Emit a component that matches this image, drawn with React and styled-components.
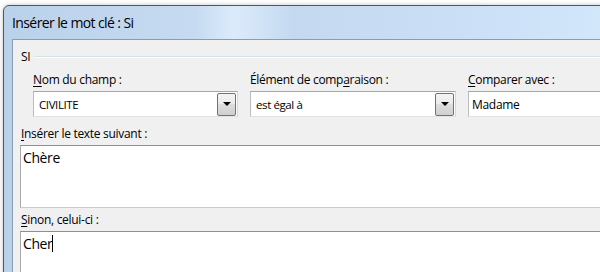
import React from 'react';
import styled, { createGlobalStyle } from 'styled-components';

//page reset: screenshot shows the window cut off at right and bottom
const GlobalStyle = createGlobalStyle`
    html, body {
        margin: 0;
        padding: 0;
        background: #ffffff;
        overflow: hidden;
    }
    body {
        font-family: "Open Sans", "Noto Sans", sans-serif;
        font-size: 12px;
        letter-spacing: -0.3px;
        color: #000;
    }
`;

//Window frame (aero style)
const Window = styled.div`
    margin: 5px 0 0 3px;
    width: 640px;
    height: 320px;
    border: 1px solid #4d5867;
    border-radius: 6px 6px 0 0;
    background: linear-gradient(90deg, #bad1eb 0%, #c6dbf1 30%, #dcebfb 36%, #c4d9f0 45%, #cde2f8 80%, #d6e9fc 100%);
    display: flex;
    flex-direction: column;
    box-shadow: 0 0 4px rgba(0, 0, 0, 0.25);
`;

const TitleBar = styled.div`
    height: 33px;
    display: flex;
    align-items: center;
    padding-left: 8px;
    font-size: 14px;
    letter-spacing: -0.6px;
    color: #000;
`;

const Client = styled.div`
    flex: 1;
    margin-left: 8px;
    border-top: 1px solid #8a9cb0;
    border-left: 1px solid #8a9cb0;
    background: #f0f0f0;
    padding: 9px 0 0 8px;
    display: flex;
    flex-direction: column;
`;

const GroupHeader = styled.div`
    display: flex;
    align-items: center;
    gap: 5px;
    height: 16px;
    line-height: 16px;
`;

const GroupLine = styled.div`
    flex: 1;
    height: 1px;
    background: #d5dfe5;
    border-bottom: 1px solid #ffffff;
`;

const FieldsRow = styled.div`
    display: grid;
    grid-template-columns: 205px 206px 205px;
    column-gap: 12px;
    margin: 7px 0 0 12px;
`;

const Field = styled.div`
    display: flex;
    flex-direction: column;
    gap: 3px;
`;

const Label = styled.label`
    display: block;
    height: 16px;
    line-height: 16px;
    white-space: nowrap;
    & u {
        text-decoration: underline;
        text-underline-offset: 2px;
    }
`;

const Combo = styled.div`
    height: 24px;
    display: flex;
    align-items: center;
    background: #fff;
    border: 1px solid;
    border-color: #a3a6ad #d3d6dc #dfe2e8 #b9bcc2;
`;

const ComboText = styled.span`
    flex: 1;
    padding-left: 5px;
    font-size: 11.5px;
    letter-spacing: -0.4px;
`;

const DropButton = styled.div`
    width: 17px;
    height: 21px;
    margin-right: 1px;
    border: 1px solid #727272;
    border-radius: 2px;
    background: linear-gradient(#f4f4f4 0%, #ebebeb 45%, #dddddd 50%, #cfcfcf 100%);
    display: flex;
    align-items: center;
    justify-content: center;
`;

const Arrow = styled.div`
    width: 0;
    height: 0;
    border-left: 4px solid transparent;
    border-right: 4px solid transparent;
    border-top: 4px solid #000;
`;

const TextInput = styled.div`
    height: 24px;
    display: flex;
    align-items: center;
    background: #fff;
    border: 1px solid;
    border-color: #a3a6ad #d3d6dc #dfe2e8 #b9bcc2;
    padding-left: 3px;
`;

const Section = styled.div`
    display: flex;
    flex-direction: column;
    gap: 3px;
    margin-top: ${p => p.$top}px;
`;

const TextArea = styled.div`
    margin-left: -1px;
    height: ${p => p.$h}px;
    background: #fff;
    border: 1px solid;
    border-color: #8e8f8f #b8b9ba #c9cacb #a8a9aa;
    padding: 2px 0 0 2px;
    font-size: 14px;
    letter-spacing: -0.4px;
    line-height: 20px;
`;

const Caret = styled.span`
    display: inline-block;
    width: 1px;
    height: 17px;
    background: #000;
    vertical-align: -3px;
`;

const fields = [
    { label: <><u>N</u>om du champ :</>, value: 'CIVILITE', combo: true },
    { label: <>Élément de comp<u>a</u>raison :</>, value: 'est égal à', combo: true },
    { label: <><u>C</u>omparer avec :</>, value: 'Madame', combo: false },
];

export default function App() {
    return (
        <>
            <GlobalStyle />
            <Window>
                <TitleBar>Insérer le mot clé : Si</TitleBar>
                <Client>
                    <GroupHeader>
                        <span>SI</span>
                        <GroupLine />
                    </GroupHeader>
                    <FieldsRow>
                        {fields.map((f, i) => (
                            <Field key={i}>
                                <Label>{f.label}</Label>
                                {f.combo ? (
                                    <Combo>
                                        <ComboText>{f.value}</ComboText>
                                        <DropButton><Arrow /></DropButton>
                                    </Combo>
                                ) : (
                                    <TextInput>{f.value}</TextInput>
                                )}
                            </Field>
                        ))}
                    </FieldsRow>
                    <Section $top={9}>
                        <Label><u>I</u>nsérer le texte suivant :</Label>
                        <TextArea $h={59}>Chère</TextArea>
                    </Section>
                    <Section $top={4}>
                        <Label><u>S</u>inon, celui-ci :</Label>
                        <TextArea $h={80}>Cher<Caret /></TextArea>
                    </Section>
                </Client>
            </Window>
        </>
    );
}
